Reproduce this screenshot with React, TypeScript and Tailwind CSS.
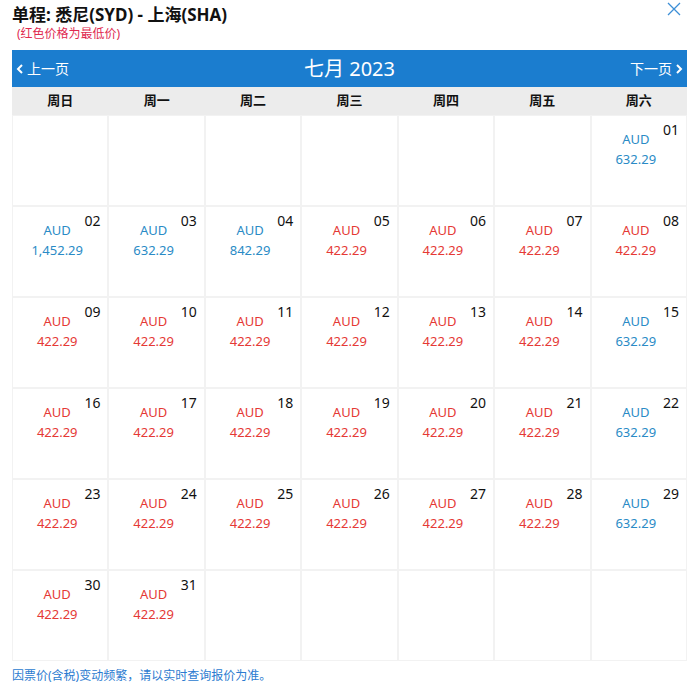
import React from "react";

const blue: Record<number, string> = { 1: "632.29", 2: "1,452.29", 3: "632.29", 4: "842.29", 8: "422.29", 15: "632.29", 22: "632.29", 29: "632.29" };
const blueDays = new Set([1, 2, 3, 4, 15, 22, 29]);

export default function App() {
  const cells: (number | null)[] = [null, null, null, null, null, null];
  for (let d = 1; d <= 31; d++) cells.push(d);
  while (cells.length < 42) cells.push(null);
  const rows = [];
  for (let i = 0; i < 6; i++) rows.push(cells.slice(i * 7, i * 7 + 7));
  const week = ["周日", "周一", "周二", "周三", "周四", "周五", "周六"];
  return (
    <div className="w-[699px] h-[697px] bg-white relative" style={{ fontFamily: '"Microsoft YaHei","Noto Sans","Noto Sans CJK SC",sans-serif' }}>
      <div className="absolute right-[18px] top-[2px] text-[#4a90d9] text-[20px] leading-none">
        <svg width="14" height="14" viewBox="0 0 14 14"><path d="M1 1L13 13M13 1L1 13" stroke="#3d8fd6" strokeWidth="1.3" /></svg>
      </div>
      <div className="pl-[12px] pt-[3px]">
        <div className="text-[17px] font-bold text-[#111] leading-[24px]">单程: 悉尼(SYD) - 上海(SHA)</div>
        <div className="text-[12px] text-[#e0294f] leading-[14px] pl-[5px]">(红色价格为最低价)</div>
      </div>
      <div className="mx-[12px] mt-[9px] w-[675px]">
        <div className="h-[37px] bg-[#1b7dcf] flex items-center justify-between text-white px-[4px]">
          <div className="flex items-center text-[14px] gap-[3px]"><svg width="8" height="12" viewBox="0 0 8 12"><path d="M6 2L2 6L6 10" stroke="white" strokeWidth="2" fill="none" /></svg>上一页</div>
          <div className="text-[20px]">七月 2023</div>
          <div className="flex items-center text-[14px] gap-[3px]">下一页<svg width="8" height="12" viewBox="0 0 8 12"><path d="M2 2L6 6L2 10" stroke="white" strokeWidth="2" fill="none" /></svg></div>
        </div>
        <div className="grid grid-cols-7 h-[28px] bg-[#ececec] text-[13px] font-bold text-[#111] items-center text-center">
          {week.map(w => <div key={w}>{w}</div>)}
        </div>
        <div className="bg-[#f2f2f2] p-[1px] grid grid-cols-7 gap-[2px]">
          {rows.flat().map((d, i) => (
            <div key={i} className="bg-white h-[89px] relative">
              {d && (
                <>
                  <div className="absolute right-[7px] top-[3px] text-[14px] text-[#111]">{String(d).padStart(2, "0")}</div>
                  <div className={`pr-[6px] pt-[13px] text-center text-[13px] leading-[20px] ${blueDays.has(d) ? "text-[#2a8bc6]" : "text-[#e53935]"}`}>
                    <div>AUD</div>
                    <div>{blueDays.has(d) ? blue[d] : "422.29"}</div>
                  </div>
                </>
              )}
            </div>
          ))}
        </div>
      </div>
      <div className="pl-[12px] mt-[6px] text-[12px] text-[#2b7bd0]">因票价(含税)变动频繁，请以实时查询报价为准。</div>
    </div>
  );
}
